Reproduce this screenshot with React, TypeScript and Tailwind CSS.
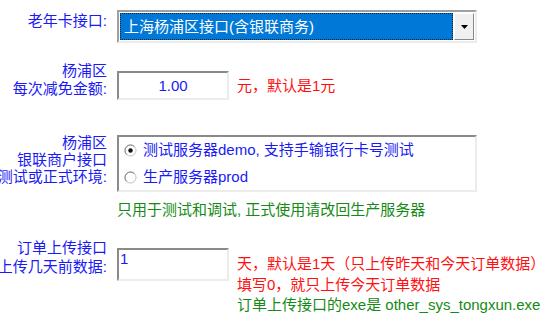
import React from "react";

const font = { fontFamily: '"Liberation Sans", "Noto Sans CJK SC", sans-serif' };

function Radio({ checked }: { checked?: boolean }) {
  return (
    <svg width="13" height="13" viewBox="0 0 13 13" className="shrink-0">
      <circle cx="6.5" cy="6.5" r="5.5" fill="#fff" stroke="#c0c0c0" />
      <path d="M2.6 10.4 A5.5 5.5 0 0 1 10.4 2.6" fill="none" stroke="#808080" strokeWidth="1" />
      {checked && <circle cx="6.5" cy="6.5" r="2.2" fill="#111" />}
    </svg>
  );
}

export default function App() {
  return (
    <div className="w-[560px] h-[326px] bg-white overflow-hidden text-[15px]" style={font}>
      <div className="pt-[10px] flex flex-col">
        {/* Row 1 */}
        <div className="flex items-start">
          <div className="w-[107px] flex flex-col items-end text-[#1a1af5] leading-[18px] pt-[2px]">
            <div className="whitespace-nowrap">老年卡接口:</div>
          </div>
          <div className="ml-[10px] w-[360px] h-[33px] flex border-2 border-t-[#a0a0a0] border-l-[#a0a0a0] border-b-[#ececec] border-r-[#ececec] bg-white p-[1px]">
            <div className="flex-1 bg-[#0078d7] border border-dotted border-[#222] flex items-center pl-[3px] text-white leading-[18px]">
              上海杨浦区接口(含银联商务)
            </div>
            <div className="w-[20px] ml-[1px] bg-[#f0f0f0] border border-t-white border-l-white border-b-[#888] border-r-[#888] flex items-center justify-center">
              <svg width="7" height="4" viewBox="0 0 7 4"><path d="M0 0h7L3.5 4z" fill="#000" /></svg>
            </div>
          </div>
        </div>

        {/* Row 2 */}
        <div className="flex items-start mt-[19px]">
          <div className="w-[107px] flex flex-col items-end text-[#1a1af5] leading-[18px]">
            <div className="whitespace-nowrap">杨浦区</div>
            <div className="whitespace-nowrap">每次减免金额:</div>
          </div>
          <div className="ml-[10px] mt-[9px] w-[112px] h-[29px] border-2 border-t-[#8a8a8a] border-l-[#8a8a8a] border-b-[#ececec] border-r-[#ececec] bg-white flex items-center justify-center text-[#1a1af5] leading-[18px]">
            1.00
          </div>
          <div className="ml-[8px] mt-[15px] text-[#ff1010] leading-[18px] whitespace-nowrap">元，默认是1元</div>
        </div>

        {/* Row 3 */}
        <div className="flex items-start mt-[34px]">
          <div className="w-[107px] flex flex-col items-end text-[#1a1af5] leading-[17px]">
            <div className="whitespace-nowrap">杨浦区</div>
            <div className="whitespace-nowrap">银联商户接口</div>
            <div className="whitespace-nowrap">测试或正式环境:</div>
          </div>
          <div className="ml-[10px] flex flex-col">
            <div className="w-[360px] h-[57px] mt-[1px] border-2 border-t-[#8a8a8a] border-l-[#8a8a8a] border-b-[#ececec] border-r-[#ececec] bg-white flex flex-col pl-[5px] pt-[4px] text-[#1a1af5] leading-[18px] gap-[9px]">
              <div className="flex items-center gap-[6px]">
                <Radio checked />
                <span className="whitespace-nowrap">测试服务器demo, 支持手输银行卡号测试</span>
              </div>
              <div className="flex items-center gap-[6px]">
                <Radio />
                <span className="whitespace-nowrap">生产服务器prod</span>
              </div>
            </div>
            <div className="mt-[9px] text-[#168a16] leading-[18px] whitespace-nowrap">只用于测试和调试, 正式使用请改回生产服务器</div>
          </div>
        </div>

        {/* Row 4 */}
        <div className="flex items-start mt-[18px]">
          <div className="w-[107px] flex flex-col items-end text-[#1a1af5] leading-[19px] pt-[1px]">
            <div className="whitespace-nowrap">订单上传接口</div>
            <div className="whitespace-nowrap">上传几天前数据:</div>
          </div>
          <div className="ml-[10px] mt-[11px] w-[112px] h-[33px] border-2 border-t-[#8a8a8a] border-l-[#8a8a8a] border-b-[#ececec] border-r-[#ececec] bg-white text-[#1a1af5] leading-[18px] pl-[1px]">
            1
          </div>
          <div className="ml-[8px] mt-[17px] leading-[20.5px] whitespace-nowrap">
            <div className="text-[#ff1010]">天，默认是1天（只上传昨天和今天订单数据）</div>
            <div className="text-[#ff1010]">填写0，就只上传今天订单数据</div>
            <div className="text-[#168a16]">订单上传接口的exe是 other_sys_tongxun.exe</div>
          </div>
        </div>
      </div>
    </div>
  );
}
